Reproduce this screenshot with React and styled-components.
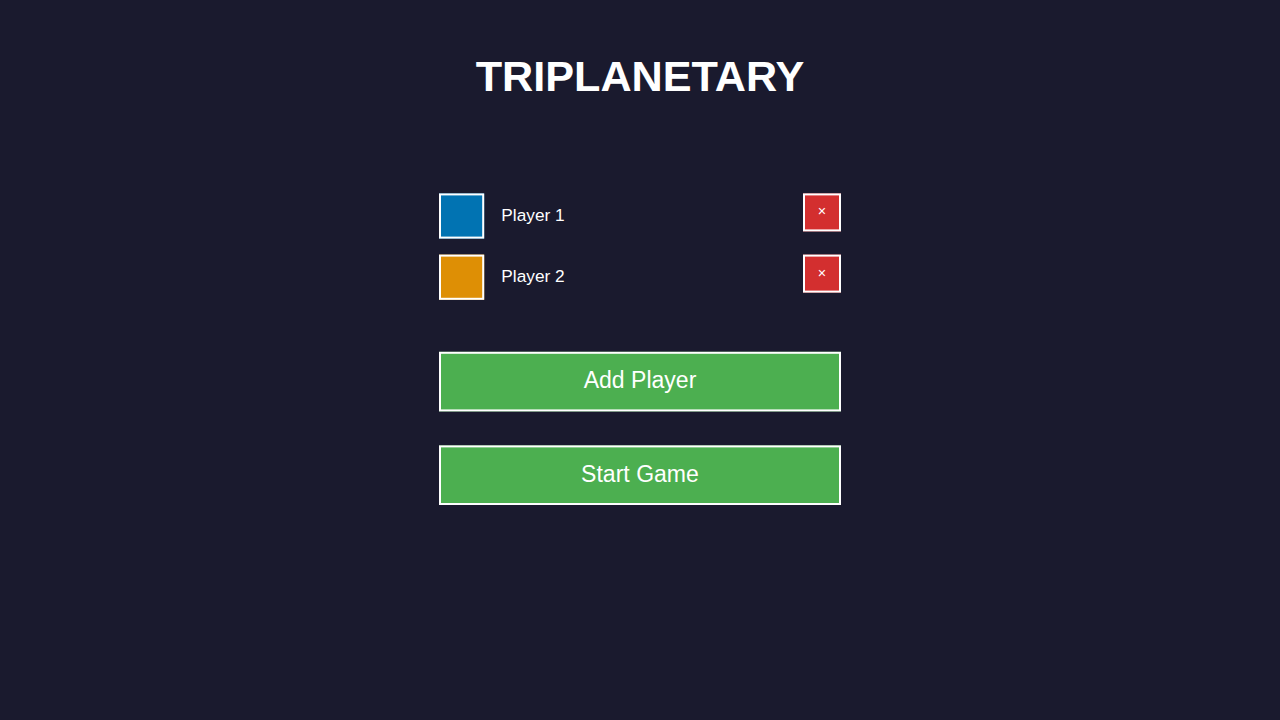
import React from "react";
import styled, { createGlobalStyle } from "styled-components";

const GlobalStyle = createGlobalStyle`
  * { box-sizing: border-box; }
  body {
    margin: 0;
    background: #1a1a2e;
    color: #fff;
    font-family: Arial, "Liberation Sans", sans-serif;
  }
`;

const Screen = styled.main`
  display: flex;
  flex-direction: column;
  align-items: center;
  height: 100vh;
  overflow: hidden;
  background: #1a1a2e;
`;

const Title = styled.h1`
  margin: 0;
  padding-top: 51px;
  height: 193px;
  font-size: 43.2px;
  line-height: 50px;
  font-weight: bold;
`;

const Setup = styled.section`
  display: flex;
  flex-direction: column;
  width: 402px;
`;

const PlayerList = styled.ul`
  display: flex;
  flex-direction: column;
  gap: 16px;
  margin: 0 0 52px;
  padding: 0;
  list-style: none;
`;

const PlayerRow = styled.li`
  display: flex;
  align-items: flex-start;
  height: 45px;
`;

/* The frame sits behind the label and carries the sub-pixel offset. */
const framed = `
  position: relative;
  isolation: isolate;
  &::before {
    content: "";
    position: absolute;
    inset: 0;
    z-index: -1;
    border: 2px solid #fff;
    transform-origin: 0 0;
  }
`;

const Swatch = styled.div`
  ${framed}
  width: 45px;
  height: 45px;
  &::before {
    background: ${(p) => p.$color};
    transform: translateY(${(p) => p.$shift}px) scale(1.00444);
  }
`;

const PlayerName = styled.span`
  flex: 1;
  padding-left: 17.3px;
  font-size: 17.28px;
  line-height: 44px;
`;

const RemoveButton = styled.button`
  ${framed}
  width: 38px;
  height: 38px;
  padding: ${(p) => Math.round(p.$shift)}px 0 0;
  border: 0;
  background: none;
  color: #fff;
  font: 14.4px/36px Arial, "Liberation Sans", sans-serif;
  display: flex;
  justify-content: center;
  align-items: flex-start;
  &::before {
    background: #d32f2f;
    transform: translateY(${(p) => p.$shift}px);
  }
`;

const Actions = styled.div`
  display: flex;
  flex-direction: column;
  gap: 34px;
`;

const ActionButton = styled.button`
  ${framed}
  display: flex;
  justify-content: center;
  align-items: flex-start;
  height: 60px;
  padding: 0;
  border: 0;
  background: none;
  color: #fff;
  font: 23.04px/58px Arial, "Liberation Sans", sans-serif;
  &::before {
    background: #4caf50;
    transform: translateY(${(p) => p.$shift}px) scaleY(0.99333);
  }
`;

const players = [
  { name: "Player 1", color: "#0173b2", shift: 0.4 },
  { name: "Player 2", color: "#de8f05", shift: 0.6 },
];

export default function App() {
  return (
    <Screen>
      <GlobalStyle />
      <Title>TRIPLANETARY</Title>
      <Setup>
        <PlayerList>
          {players.map((p) => (
            <PlayerRow key={p.name}>
              <Swatch $color={p.color} $shift={p.shift} />
              <PlayerName>{p.name}</PlayerName>
              <RemoveButton $shift={p.shift}>×</RemoveButton>
            </PlayerRow>
          ))}
        </PlayerList>
        <Actions>
          <ActionButton $shift={0.8}>Add Player</ActionButton>
          <ActionButton $shift={0.4}>Start Game</ActionButton>
        </Actions>
      </Setup>
    </Screen>
  );
}
